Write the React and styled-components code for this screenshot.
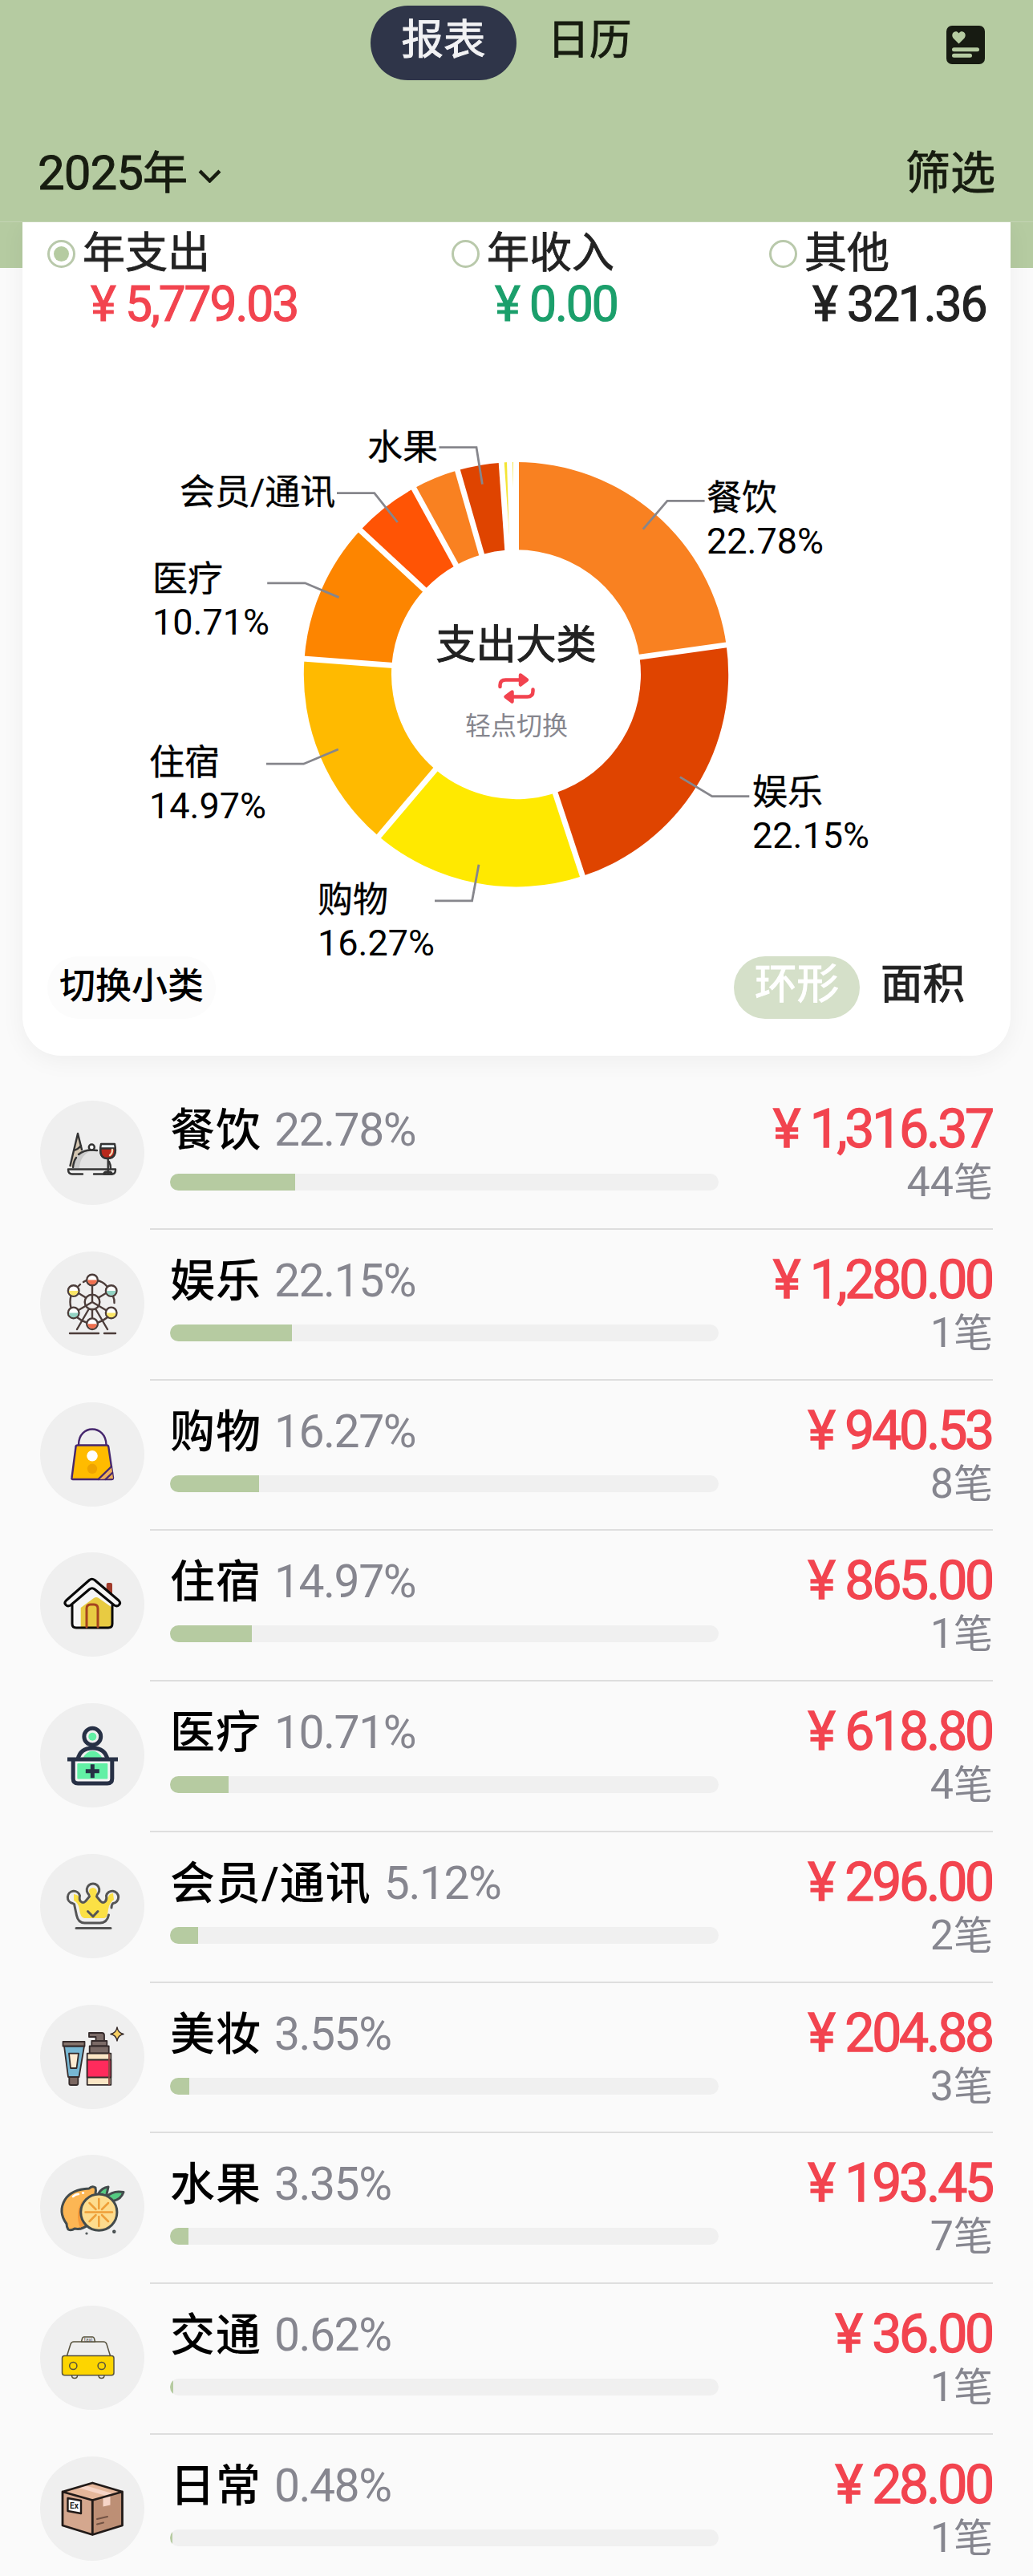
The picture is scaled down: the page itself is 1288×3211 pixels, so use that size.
import React from "react";
import styled, { createGlobalStyle } from "styled-components";

const categories = [
  { name: "餐饮", pct: 22.78, amount: "1,316.37", count: 44, color: "#f98121", icon: FoodIcon },
  { name: "娱乐", pct: 22.15, amount: "1,280.00", count: 1, color: "#df4400", icon: WheelIcon },
  { name: "购物", pct: 16.27, amount: "940.53", count: 8, color: "#ffe900", icon: BagIcon },
  { name: "住宿", pct: 14.97, amount: "865.00", count: 1, color: "#ffba00", icon: HouseIcon },
  { name: "医疗", pct: 10.71, amount: "618.80", count: 4, color: "#fd8500", icon: MedicalIcon },
  { name: "会员/通讯", pct: 5.12, amount: "296.00", count: 2, color: "#ff5405", icon: CrownIcon },
  { name: "美妆", pct: 3.55, amount: "204.88", count: 3, color: "#f98121", icon: MakeupIcon },
  { name: "水果", pct: 3.35, amount: "193.45", count: 7, color: "#df4400", icon: OrangeIcon },
  { name: "交通", pct: 0.62, amount: "36.00", count: 1, color: "#f4e534", icon: TaxiIcon },
  { name: "日常", pct: 0.48, amount: "28.00", count: 1, color: "#f4e534", icon: BoxIcon },
];

const labels = [
  { name: "餐饮", pct: "22.78%", x: 881, y: 636, line: "801.8,659.6 832,624.4 878.6,624.4" },
  { name: "娱乐", pct: "22.15%", x: 938, y: 1003, line: "847.9,968.6 887.9,992.7 934.3,992.7" },
  { name: "购物", pct: "16.27%", x: 396, y: 1137, line: "597,1077.7 588.6,1122.8 542,1122.8" },
  { name: "住宿", pct: "14.97%", x: 186, y: 966, line: "421.8,934 378.6,952.2 332,952.2" },
  { name: "医疗", pct: "10.71%", x: 190, y: 737, line: "422.5,744.6 380.4,726.8 333.2,726.8" },
  { name: "会员/通讯", x: 224, y: 629, line: "495.7,651 466.8,614.7 420,614.7" },
  { name: "水果", x: 458, y: 573, line: "601.4,603.6 594,557.6 547.5,557.6" },
];

const CX = 643.5;
const CY = 840.7;
const OUTER = 264.7;
const INNER = 155.5;

function point(r, t) {
  const a = t * Math.PI * 2;
  return `${(CX + r * Math.sin(a)).toFixed(2)} ${(CY - r * Math.cos(a)).toFixed(2)}`;
}

function Donut() {
  let sum = 0;
  const slices = categories.map((c) => {
    const from = sum / 100;
    sum += c.pct;
    return { ...c, from, to: sum / 100 };
  });
  return (
    <Chart viewBox="28 420 1232 772">
      {slices.map((s) => (
        <path
          key={s.name}
          fill={s.color}
          d={`M${point(OUTER, s.from)} A${OUTER} ${OUTER} 0 0 1 ${point(OUTER, s.to)} L${point(INNER, s.to)} A${INNER} ${INNER} 0 0 0 ${point(INNER, s.from)}Z`}
        />
      ))}
      {slices.map((s) => (
        <path
          key={s.name}
          stroke="#fff"
          strokeWidth="7"
          d={`M${point(INNER - 2, s.from)} L${point(OUTER + 2, s.from)}`}
        />
      ))}
      {labels.map((l) => (
        <g key={l.name}>
          <polyline points={l.line} fill="none" stroke="#86868c" strokeWidth="2.8" />
          <LabelName x={l.x} y={l.y}>
            {l.name}
          </LabelName>
          {l.pct && (
            <LabelPct x={l.x} y={l.y + 53.5}>
              {l.pct}
            </LabelPct>
          )}
        </g>
      ))}
      <CenterTitle x={CX} y="821">
        支出大类
      </CenterTitle>
      <g stroke="#f2434f" strokeWidth="4.5" strokeLinecap="round" strokeLinejoin="round" fill="none">
        <path d="M623.5 856v-2q0-6.500 7-6.500H648" />
        <path d="M664.500 859.500v2q0 7-7 7H640" />
        <path d="M649 841.500l8 6-8 6z" fill="#f9414e" />
        <path d="M638.500 862.500l-8 6 8 6z" fill="#f9414e" />
      </g>
      <CenterHint x={CX + 0.5} y="916">
        轻点切换
      </CenterHint>
    </Chart>
  );
}

function Summary({ label, amount, color, checked }) {
  return (
    <SummaryItem>
      <SummaryLabel>
        <Radio $checked={checked} />
        {label}
      </SummaryLabel>
      <SummaryAmount $color={color}>
        <Yen>¥</Yen>
        {amount}
      </SummaryAmount>
    </SummaryItem>
  );
}

function CategoryRow({ item }) {
  const Icon = item.icon;
  return (
    <Row>
      <IconCircle>
        <Icon />
      </IconCircle>
      <RowBody>
        <RowMain>
          <RowName>
            {item.name}
            <RowPct>{item.pct.toFixed(2)}%</RowPct>
          </RowName>
          <Track>
            <Fill style={{ width: `${item.pct}%` }} />
          </Track>
        </RowMain>
        <RowSide>
          <RowAmount>
            <Yen>¥</Yen>
            {item.amount}
          </RowAmount>
          <RowCount>
            <Num>{item.count}</Num>笔
          </RowCount>
        </RowSide>
      </RowBody>
    </Row>
  );
}

export default function App() {
  return (
    <Page>
      <GlobalStyle />
      <Header>
        <TopBar>
          <Tabs>
            <Tab $active>报表</Tab>
            <Tab>日历</Tab>
          </Tabs>
          <CardIcon viewBox="0 0 48 48">
            <rect width="48" height="48" rx="7" fill="#171b12" />
            <path
              fill="#b5cba1"
              d="M15.500 22.500L8.500 15.500C4.500 10 11.500 4 15.500 9.500C19.500 4 26.500 10 22.500 15.500Z"
            />
            <rect x="7" y="27.300" width="34" height="5" rx="2.500" fill="#b5cba1" />
            <rect x="7" y="34.800" width="25" height="5" rx="2.500" fill="#b5cba1" />
          </CardIcon>
        </TopBar>
        <FilterBar>
          <Year>
            <YearNum>2025</YearNum>年
            <Chevron viewBox="0 0 30 18">
              <path d="M3 3l12 12L27 3" />
            </Chevron>
          </Year>
          <span>筛选</span>
        </FilterBar>
      </Header>
      <CardArea>
        <Card>
          <SummaryGrid>
            <Summary label="年支出" amount="5,779.03" color="#f2444f" checked />
            <Summary label="年收入" amount="0.00" color="#1b9f6b" />
            <Summary label="其他" amount="321.36" color="#222" />
          </SummaryGrid>
          <Donut />
          <CardFooter>
            <SwitchButton>切换小类</SwitchButton>
            <Modes>
              <Mode $active>环形</Mode>
              <Mode>面积</Mode>
            </Modes>
          </CardFooter>
        </Card>
      </CardArea>
      <List>
        {categories.map((c) => (
          <CategoryRow key={c.name} item={c} />
        ))}
      </List>
    </Page>
  );
}

function FoodIcon() {
  return (
    <Icon stroke="#333">
      <path d="M37 83L47 41L52 62L41 82z" fill="#d3c5b0" stroke="none" />
      <path d="M37.500 81L47 41L52 61M42 62q5-1 9-6" />
      <path d="M41 84q1-22 24-22t24 22z" fill="#e2e2e2" stroke="none" />
      <path d="M41 84q1-22 24-22q-15 5-16 22z" fill="#c9c9c9" stroke="none" />
      <path d="M41 83q1-8 4-12M48 67q8-7 23-5M86 76q2 4 2 8" />
      <circle cx="64.300" cy="58" r="3.500" fill="#fff" />
      <path d="M35 85.500h59q0 6-4 6H67M53 91.500H40q-5 0-5-6" />
      <path d="M76 54h17q4 18-8.500 18T76 54z" fill="#e8f1f5" />
      <path d="M75.500 59.500h18q1 12-9 12.500t-9-12.500z" fill="#b8281b" />
      <path d="M90 61q0 5-3 7" stroke="#f5d5b0" />
      <path d="M84.700 72v18M79.500 91.500q0-3 5-3t5 3z" fill="#888" />
    </Icon>
  );
}

function WheelIcon() {
  const cabins = [
    [65, 35.5, "#ef6f4f"],
    [41.7, 49, "#fbe667"],
    [88.7, 49, "#93d3c3"],
    [41.7, 76.4, "#93d3c3"],
    [88.7, 76.4, "#fbe667"],
    [65, 90.2, "#ef6f4f"],
  ];
  return (
    <Icon stroke="#4c3d3a">
      <path d="M54 38q3-2 6-2.500M48 43l2-2M70 36q8 1 13 7M38.500 55q-2 8 0 15M91 56q2 4 1.500 8M46 82q6 5 13 7M84 82q-6 5-13 7" />
      <path d="M65 42v21M65 72v12M48 52l9 5.500M82 52l-9 5.500M48 73l17-10 17 10" />
      <path d="M60 73L46 97M70 73l14 24M37 102h36M80 102h14" />
      <circle cx="65" cy="63" r="9.300" />
      {cabins.map(([x, y, color]) => (
        <g key={`${x}-${y}`}>
          <circle cx={x} cy={y} r="6.800" fill="#fff" />
          <path d={`M${x - 5.8} ${y}h11.600a5.800 5.800 0 0 1-11.600 0z`} fill={color} stroke="none" />
        </g>
      ))}
    </Icon>
  );
}

function BagIcon() {
  return (
    <Icon stroke="#46276e">
      <path d="M48 53C48 27 82 27 82.500 53" />
      <path d="M47 53.500h36q2 0 2.300 2L91 94q0 2-2 2H41q-2 0-1.500-2L44.500 55.500q0-2 2.500-2z" fill="#ffbb00" />
      <path d="M73 96L89 80L91 95z" fill="#efaf59" stroke="none" />
      <path d="M72.500 96L89 80M81.500 96l8.500-8" />
      <circle cx="65" cy="66.800" r="6.800" fill="#fff" stroke="none" />
      <circle cx="65" cy="82.800" r="6.200" fill="#eea300" stroke="none" />
    </Icon>
  );
}

function HouseIcon() {
  return (
    <Icon stroke="#0a0a0a">
      <path d="M82.700 51V40q0-2 2-2H88q2 0 2 2v13z" fill="#a13b2b" stroke="none" />
      <path d="M40 65v24q0 5 5 5h40q5 0 5-5V65L65 46z" fill="#f6f6f6" stroke="none" />
      <path d="M50.700 93V69L67 57q3-2 6 0l17 12v24z" fill="#e8cb42" stroke="none" />
      <path d="M40 66v23q0 5 5 5h40q5 0 5-5V66" strokeWidth="3" />
      <path d="M58 93V70q0-5 5-5h4q5 0 5 5v23" stroke="#a5441f" strokeWidth="3" />
      <path
        d="M61.500 34.500q3-2.500 6.500 0L98 60q3 3 .5 5.500t-6 .5L68 46q-3-2.500-6.500 0L38 66q-3.500 2-6-.5t.5-5.500z"
        fill="#f6f6f6"
        strokeWidth="3"
      />
    </Icon>
  );
}

function MedicalIcon() {
  return (
    <Icon stroke="#273045">
      <circle cx="65.300" cy="41.700" r="10.400" fill="#efefef" strokeWidth="5" />
      <circle cx="65.300" cy="41.700" r="5" fill="#62f0a5" stroke="none" />
      <path d="M47 70q3-14 18.500-14T84 70" strokeWidth="5" />
      <path d="M53 69q5-9.500 12.300-9.500T78 69z" fill="#62f0a5" stroke="none" />
      <path d="M41.200 71v23q0 6 6 6h36.600q6 0 6-6V71" strokeWidth="5" fill="#f4f4f4" />
      <path d="M34 70h63" strokeWidth="5" strokeLinecap="butt" />
      <rect x="46.300" y="75" width="38" height="19.500" rx="1" fill="#62f0a5" stroke="none" />
      <path d="M65.300 76.300v17M56.800 84.800h17" strokeWidth="5" strokeLinecap="butt" />
    </Icon>
  );
}

function CrownIcon() {
  return (
    <Icon stroke="#555">
      <path
        d="M42 50q8 1 8 8l6 3 6-5 1-4q-5-9 3-10 7 1 4 10l2 4 6 5 6-4q1-8 7-8l1 8q-6 4-7 12-1 11-5 11H55q-5-1-6-11-1-8-7-11z"
        fill="#fbe045"
        stroke="none"
      />
      <path
        d="M89 67q0-4 2-5.500A7.700 7.700 0 1 0 82.500 52q1 4-1 7-3 3-6 0l-5-6q0-2 2-4a7.800 7.800 0 1 0-13 0q2 2 2 4l-5 6q-3 3-6 0-2-2-1-7a7.700 7.700 0 1 0-9 9.500l2 1 3 14q2 9.500 10 9.500h19q9 0 11-10"
        strokeWidth="3"
      />
      <path d="M59.500 71.500L66 78l6-6.500M45 92.500h43" strokeWidth="3" />
    </Icon>
  );
}

function MakeupIcon() {
  return (
    <Icon stroke="#352b2b" strokeWidth="1.8">
      <path d="M30 51.500h25L48.500 90H35z" fill="#77b7d3" />
      <path d="M36 60.600h12L45.500 79h-7.500z" fill="#fdebd2" />
      <rect x="28.500" y="46" width="27" height="5.500" fill="#85746c" />
      <path d="M36.300 90h11v8q0 2-2 2h-7q-2 0-2-2z" fill="#7b6761" />
      <path d="M61 35h16q3 0 3 3v7H69.500v-5H61z" fill="#7b6b67" />
      <rect x="64.300" y="45" width="19" height="6.500" fill="#7b6b67" />
      <rect x="61.700" y="51.500" width="24" height="9" fill="#7b6b67" />
      <rect x="58.700" y="60.600" width="29.600" height="39.200" fill="#fbe6c5" />
      <rect x="58.700" y="68.500" width="29.600" height="22" fill="#ff2b5c" />
      <path d="M86 61.500v38" stroke="#8c4a45" />
      <path d="M96 28q1 7 8 8.500-7 1.500-8 8.500-1-7-8-8.500 7-1.500 8-8.500z" fill="#f7cf63" strokeWidth="1.500" />
    </Icon>
  );
}

function OrangeIcon() {
  return (
    <Icon stroke="#434b4c" strokeWidth="3">
      <path d="M73 48q4-7 12-8-1 5-2 9M83 52q8-8 21-5.500-3 9-13 11" fill="#55cb82" />
      <path
        d="M33 86Q22 71 31 56q8-13 30-14 4-4 8-1 1 4 0 6 8 18-9 40-8 7-17 5-4 3-8 1-2-3-2-7z"
        fill="#fcb654"
      />
      <path d="M52 58q-9 15-2 33l6-4z" fill="#f59a3a" stroke="none" />
      <circle cx="73.300" cy="71.600" r="22.600" fill="#fddc8e" />
      <path
        d="M73.300 55v12M73.300 77v12M56.500 71.600h12M78 71.600h12M61.500 60l8 8M77 75l8 8M85 60l-8 8M69.500 75l-8 8M70 71.600h7"
        stroke="#ee9f38"
        strokeWidth="2.500"
      />
      <path d="M41 52q3-3 7-3M53 47.500h1" stroke="#fff" strokeWidth="2.500" />
      <circle cx="58" cy="98" r=".6" strokeWidth="2" />
      <circle cx="92.300" cy="95.800" r="1" strokeWidth="2.500" />
    </Icon>
  );
}

function TaxiIcon() {
  return (
    <Icon stroke="#57523d" strokeWidth="1.500">
      <path d="M33.500 62.500L38 48q1-3 4-3h37q3 0 4 3l4.500 14.500" fill="#eee" />
      <path d="M51.500 45l1-4q.5-2 2-2h11q1.500 0 2 2l1 4z" fill="#eee" />
      <rect x="27.500" y="62.500" width="64.500" height="24.200" rx="3" fill="#fdd500" />
      <circle cx="41.300" cy="75" r="4.600" />
      <circle cx="76.700" cy="75" r="4.600" />
      <path d="M39.500 87q0 3.500 3.500 3.500t3.500-3.500M73 87q0 3.500 3.500 3.500T80 87" />
      <text x="60" y="44.600" fontSize="6.500" textAnchor="middle" fill="#555" stroke="none">
        taxi
      </text>
    </Icon>
  );
}

function BoxIcon() {
  return (
    <Icon stroke="#211a18">
      <path d="M65.300 33L102.500 44L65.300 54.500L28 44z" fill="#e5b79b" stroke="none" />
      <path d="M46 38.500L84 49.500L93 47L56 36z" fill="#f6d4c6" stroke="none" />
      <path d="M28 44l37.300 10.500V97.500L28 86z" fill="#d4a78e" stroke="none" />
      <path d="M102.500 44L65.300 54.500V97.500L102.500 86z" fill="#bd8f75" stroke="none" />
      <path d="M78.500 51l9-2.500v12l-9 2z" fill="#f6d4c6" stroke="none" />
      <path d="M65.300 33L102.500 44V86L65.300 97.500L28 86V44zM28 44l37.300 10.500L102.500 44M65.300 54.500v43" strokeWidth="2.800" />
      <path d="M34.500 52l16.500 3v16l-16.500-3z" fill="#fff" />
      <path d="M71 78l13-3M71 84.500l8-2" stroke="#735344" strokeWidth="2" />
      <text x="37" y="65" fontSize="10" fontWeight="700" fill="#222" stroke="none">
        Ex
      </text>
    </Icon>
  );
}

const GlobalStyle = createGlobalStyle`
  body {
    margin: 0;
    background: #fafafa;
  }
`;

const Page = styled.div`
  width: 1288px;
  height: 3211px;
  overflow: hidden;
  background: #fafafa;
  color: #222;
  font-family: Roboto, "Noto Sans CJK SC", sans-serif;
`;

const Header = styled.header`
  position: relative;
  z-index: 1;
  box-sizing: border-box;
  height: 277px;
  padding-top: 7px;
  background: #b5cba1;
  border-bottom: 1px solid #c3d4b4;
  color: #171c10;
`;

const TopBar = styled.div`
  display: flex;
  justify-content: space-between;
  align-items: flex-start;
  padding: 0 60px 0 462px;
`;

const Tabs = styled.div`
  display: flex;
`;

const Tab = styled.div`
  box-sizing: border-box;
  width: 182px;
  height: 93px;
  border-radius: 47px;
  background: ${(props) => (props.$active ? "#2f3549" : "transparent")};
  color: ${(props) => (props.$active ? "#f2f2f4" : "#171c10")};
  font-size: 52.500px;
  line-height: 87px;
  text-align: center;
  -webkit-text-stroke: 0.9px;
`;

const CardIcon = styled.svg`
  width: 48px;
  height: 48px;
  margin-top: 24.500px;
`;

const FilterBar = styled.div`
  display: flex;
  justify-content: space-between;
  padding: 0 47px;
  margin-top: 74px;
  font-size: 56px;
  line-height: 84px;
  -webkit-text-stroke: 0.9px;
`;

const Year = styled.div`
  display: flex;
  align-items: center;
`;

const YearNum = styled.span`
  font-size: 60px;
  letter-spacing: -1px;
`;

const Chevron = styled.svg`
  width: 31px;
  margin-left: 12px;
  margin-top: 6px;
  fill: none;
  stroke: #171c10;
  stroke-width: 4.2;
`;

const CardArea = styled.section`
  padding: 0 28px;
  background: linear-gradient(#b5cba1 57px, #fafafa 57px);
`;

const Card = styled.div`
  box-sizing: border-box;
  height: 1039px;
  background: #fff;
  border-radius: 0 0 48px 48px;
  box-shadow: 0 6px 30px rgba(0, 0, 0, 0.05);
`;

const SummaryGrid = styled.div`
  display: grid;
  grid-template-columns: 504px 396px auto;
  height: 143px;
  padding-left: 31px;
`;

const SummaryItem = styled.div`
  padding-top: 7px;
`;

const SummaryLabel = styled.div`
  display: flex;
  align-items: center;
  gap: 9px;
  font-size: 53px;
  line-height: 64px;
  -webkit-text-stroke: 0.8px;
`;

const Radio = styled.span`
  box-sizing: border-box;
  width: 35px;
  height: 35px;
  padding: 5px;
  border: 3px solid #b9c9ab;
  border-radius: 50%;
  background: ${(props) => (props.$checked ? "#b5cba1" : "#fff")};
  background-clip: content-box;
`;

const SummaryAmount = styled.div`
  margin-left: 54px;
  font-size: 60.500px;
  letter-spacing: -2.100px;
  line-height: 64px;
  color: ${(props) => props.$color};
  -webkit-text-stroke: 1.1px;
`;

const Yen = styled.span`
  margin-right: 0.22em;
`;

const Chart = styled.svg`
  display: block;
  width: 1232px;
  height: 772px;
  fill: #000;
  overflow: visible;
`;

const LabelName = styled.text`
  font-size: 44px;
  stroke: #000;
  stroke-width: 0.3px;
`;

const LabelPct = styled.text`
  font-size: 45px;
`;

const CenterTitle = styled.text`
  font-size: 50px;
  text-anchor: middle;
  fill: #222;
  stroke: #222;
  stroke-width: 1px;
`;

const CenterHint = styled.text`
  font-size: 32px;
  text-anchor: middle;
  fill: #86868e;
`;

const CardFooter = styled.div`
  display: flex;
  justify-content: space-between;
  padding: 0 31px;
`;

const SwitchButton = styled.div`
  width: 210px;
  height: 78px;
  border-radius: 39px;
  background: #fcfcfc;
  color: #000;
  font-size: 45px;
  font-weight: 500;
  line-height: 75px;
  text-align: center;
`;

const Modes = styled.div`
  display: flex;
`;

const Mode = styled.div`
  width: 157px;
  height: 78px;
  border-radius: 39px;
  background: ${(props) => (props.$active ? "#d5e0c9" : "transparent")};
  color: ${(props) => (props.$active ? "#fff" : "#222")};
  font-size: 52.500px;
  line-height: 70px;
  text-align: center;
  -webkit-text-stroke: 1.1px;
`;

const List = styled.div`
  padding: 29px 50px 0;
`;

const Row = styled.div`
  display: flex;
  gap: 7px;
  height: 187.750px;
`;

const IconCircle = styled.div`
  flex: none;
  width: 130px;
  height: 130px;
  margin-top: 27px;
  border-radius: 50%;
  background: #efefef;
`;

const Icon = styled.svg.attrs((props) => ({
  viewBox: "0 0 130 130",
  fill: "none",
  strokeWidth: props.strokeWidth || 2.4,
  strokeLinecap: "round",
  strokeLinejoin: "round",
}))`
  display: block;
  width: 130px;
  height: 130px;
`;

const RowBody = styled.div`
  box-sizing: border-box;
  display: flex;
  justify-content: space-between;
  width: 1051px;
  padding: 30px 0 0 25px;
  border-bottom: 2px solid #dedede;
`;

const RowMain = styled.div`
  width: 684px;
`;

const RowName = styled.div`
  color: #000;
  font-size: 56px;
  font-weight: 500;
  letter-spacing: 1px;
  line-height: 67px;
  white-space: nowrap;
`;

const RowPct = styled.span`
  margin-left: 16px;
  color: #86868f;
  font-size: 57px;
  font-weight: 400;
  letter-spacing: -1.500px;
`;

const Track = styled.div`
  height: 21px;
  margin-top: 20px;
  border-radius: 10.500px;
  background: #f0f0f0;
  overflow: hidden;
`;

const Fill = styled.div`
  height: 100%;
  background: #b6cba1;
`;

const RowSide = styled.div`
  text-align: right;
  white-space: nowrap;
`;

const RowAmount = styled.div`
  margin-right: 1px;
  color: #f2444f;
  font-size: 66px;
  letter-spacing: -3.200px;
  line-height: 66px;
  -webkit-text-stroke: 1.3px;
`;

const RowCount = styled.div`
  color: #86868f;
  font-size: 49px;
  line-height: 66px;
`;

const Num = styled.span`
  font-size: 52px;
`;
